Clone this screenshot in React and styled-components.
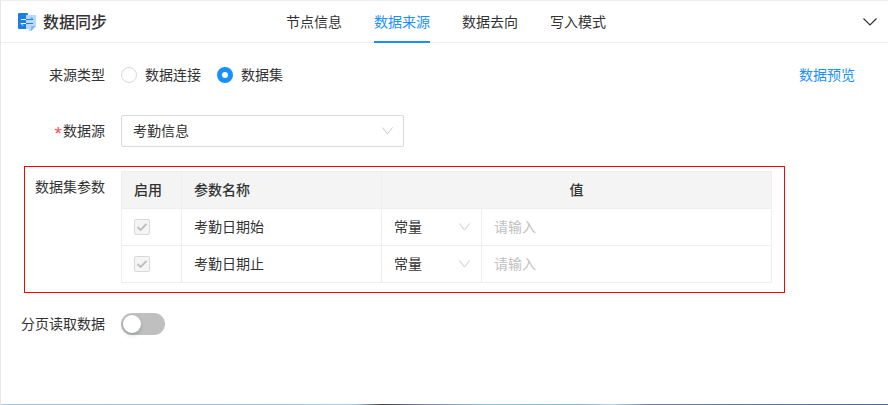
import React from "react";
import styled, { createGlobalStyle } from "styled-components";

const Global = createGlobalStyle`
  html, body { margin: 0; padding: 0; background: #fff; }
  body { font-family: "Noto Sans CJK SC", "Liberation Sans", sans-serif; font-size: 14px; color: #333; }
`;

const Page = styled.div`
  width: 888px; height: 405px; box-sizing: border-box; overflow: hidden;
  border-top: 1px solid #eee; border-left: 1px solid #e8e8e8;
  display: flex; flex-direction: column; position: relative;
`;
const BottomStrip = styled.div`
  position: absolute; left: -1px; right: 0; bottom: 0; height: 1px;
  background: linear-gradient(90deg, #a8c6de 0%, #9cc4dc 25%, #a6cfe0 40%, #3a3f44 43%, #7d86a8 48%, #8fc4d6 55%, #86b5c0 65%, #b4d4e4 69%, #6f7ea0 73%, #4a6a98 100%);
`;
const Header = styled.header`
  height: 42px; flex: none; box-sizing: border-box; border-bottom: 1px solid #eee;
  display: flex; align-items: center; position: relative; padding-left: 17px;
`;
const Brand = styled.div`
  display: flex; align-items: center; gap: 7px;
  font-size: 16px; font-weight: 500; color: #333; line-height: 22px;
`;
const Text = styled.span`
  display: block; line-height: 20px; margin-bottom: 2px; white-space: nowrap;
`;
const Tabs = styled.nav`
  position: absolute; left: 285px; top: 0; height: 42px; display: flex; gap: 32px;
`;
const Tab = styled.div`
  height: 42px; line-height: 40px; box-sizing: border-box; font-size: 14px;
  color: ${p => (p.$active ? "#1890ff" : "#333")};
  border-bottom: 2px solid ${p => (p.$active ? "#1890ff" : "transparent")};
`;
const Collapse = styled.div`
  position: absolute; right: 11px; top: 17px; width: 14px; height: 8px; display: flex;
`;
const Body = styled.main`
  flex: 1; display: flex; flex-direction: column;
`;
const Row = styled.div`
  display: flex; align-items: center; position: relative;
  margin-top: ${p => p.$top}px;
  height: ${p => p.$h}px;
`;
const Label = styled.div`
  width: 104px; flex: none; display: flex; justify-content: flex-end; align-items: center;
  font-size: 14px; color: #333; white-space: nowrap;
`;
const Required = styled.span`
  color: #ff4d4f; font-family: "Liberation Sans", sans-serif; font-size: 19px; line-height: 20px;
  margin-top: 6px; margin-right: 1px;
`;
const Radios = styled.div` margin-left: 16px; display: flex; align-items: center; gap: 16px; `;
const RadioItem = styled.div`
  display: flex; align-items: center; gap: 8px; font-size: 14px; color: #333;
`;
const RadioDot = styled.span`
  width: 16px; height: 16px; box-sizing: border-box; border-radius: 50%; flex: none;
  background: #fff;
  border: ${p => (p.$on ? "5px solid #1890ff" : "1px solid #d9d9d9")};
`;
const Preview = styled.div`
  position: absolute; right: 33px; top: 0; bottom: 0; display: flex; align-items: center;
  color: #1890ff; font-size: 14px;
`;
const SelectBox = styled.div`
  margin-left: 16px; width: 283px; height: 32px; box-sizing: border-box;
  border: 1px solid #d9d9d9; border-radius: 2px;
  display: flex; align-items: center; justify-content: space-between;
  padding: 0 10px 0 11px; color: #333; font-size: 14px;
`;
const ParamBox = styled.section`
  margin-top: 19px; margin-left: 23px; width: 761px; height: 127px; box-sizing: border-box;
  border: 1px solid #f00; display: flex; padding-top: 4px;
`;
const ParamLabel = styled.div`
  width: 80px; flex: none; text-align: right; font-size: 14px; color: #333; line-height: 20px; padding-top: 5px;
`;
const Table = styled.div`
  margin-left: 16px; width: 651px; height: 112px; box-sizing: border-box;
  border: 1px solid #eee; font-size: 14px;
`;
const TableRow = styled.div`
  display: grid; grid-template-columns: 60px 200px 100px 1fr;
  height: ${p => (p.$head ? "36px" : "37px")};
  background: ${p => (p.$head ? "#f4f4f4" : "#fff")};
  font-weight: ${p => (p.$head ? 500 : 400)};
  color: #333;
  border-top: ${p => (p.$head ? "none" : "1px solid #eee")};
  box-sizing: border-box;
`;
const Cell = styled.div`
  display: flex; align-items: center; box-sizing: border-box;
  padding: 0 ${p => (p.$between ? "11px" : "12px")} 0 12px;
  justify-content: ${p => (p.$center ? "center" : p.$between ? "space-between" : "flex-start")};
  border-right: ${p => (p.$last ? "none" : "1px solid #eee")};
  font-size: 14px;
  grid-column: ${p => p.$span || "auto"};
`;
const CheckBox = styled.span`
  width: 16px; height: 16px; box-sizing: border-box; background: #f5f5f5;
  border: 1px solid #d9d9d9; border-radius: 2px; display: flex; align-items: center; justify-content: center;
`;
const Placeholder = styled(Text)` color: #bfbfbf; font-size: 14px; `;
const Switch = styled.div`
  margin-left: 16px; width: 44px; height: 22px; border-radius: 11px; background: #bfbfbf; position: relative;
`;
const Knob = styled.span`
  position: absolute; left: 2px; top: 2px; width: 18px; height: 18px; border-radius: 50%;
  background: #fff; box-shadow: 0 2px 4px rgba(0,35,11,.2);
`;

const Chevron = ({ c = "#c9c9c9", w = 11, h = 8, sw = 1 }) => (
  <svg width={w} height={h} viewBox={`0 0 ${w} ${h}`} fill="none">
    <path d={`M0.5 0.5 L${w / 2} ${h - 1} L${w - 0.5} 0.5`} stroke={c} strokeWidth={sw} />
  </svg>
);

const Logo = () => (
  <svg width="18" height="18" viewBox="0 0 18 18" style={{ display: "block" }}>
    <rect x="0" y="0" width="10" height="16" rx="1" fill="#1a7fe0" />
    <path d="M8 2 H17 Q18 2 18 3 V13 L13 18 H11 V16 H8 Z" fill="#b9d8f6" />
    <path d="M13 18 V13 H18 Z" fill="#7db8f0" />
    <path d="M3 6.5 H8" stroke="#fff" strokeWidth="1" fill="none" />
    <path d="M8 6.5 H15 M13 4.5 L15 6.5" stroke="#1a7fe0" strokeWidth="1" fill="none" />
    <path d="M3 10.5 H8 M3 10.5 L5 12.5" stroke="#fff" strokeWidth="1" fill="none" />
    <path d="M8 10.5 H15" stroke="#1a7fe0" strokeWidth="1" fill="none" />
  </svg>
);

const Check = () => (
  <svg width="12" height="10" viewBox="0 0 12 10" fill="none">
    <path d="M1.5 5 L4.5 8 L10.5 2" stroke="#bdbdbd" strokeWidth="1.8" />
  </svg>
);

const rows = ["考勤日期始", "考勤日期止"];

export default function App() {
  return (
    <Page>
      <Global />
      <Header>
        <Brand><Logo /><Text>数据同步</Text></Brand>
        <Tabs>
          <Tab>节点信息</Tab>
          <Tab $active>数据来源</Tab>
          <Tab>数据去向</Tab>
          <Tab>写入模式</Tab>
        </Tabs>
        <Collapse><Chevron c="#333" w={14} h={8} sw={1.2} /></Collapse>
      </Header>
      <Body>
        <Row $top={16} $h={32}>
          <Label><Text>来源类型</Text></Label>
          <Radios>
            <RadioItem><RadioDot /><Text>数据连接</Text></RadioItem>
            <RadioItem><RadioDot $on /><Text>数据集</Text></RadioItem>
          </Radios>
          <Preview><Text>数据预览</Text></Preview>
        </Row>
        <Row $top={24} $h={32}>
          <Label><Required>*</Required><Text>数据源</Text></Label>
          <SelectBox><Text>考勤信息</Text><Chevron /></SelectBox>
        </Row>
        <ParamBox>
          <ParamLabel>数据集参数</ParamLabel>
          <Table>
            <TableRow $head>
              <Cell><Text>启用</Text></Cell>
              <Cell><Text>参数名称</Text></Cell>
              <Cell $last $center $span="3 / 5"><Text>值</Text></Cell>
            </TableRow>
            {rows.map(r => (
              <TableRow key={r}>
                <Cell><CheckBox><Check /></CheckBox></Cell>
                <Cell><Text>{r}</Text></Cell>
                <Cell $between><Text>常量</Text><Chevron /></Cell>
                <Cell $last><Placeholder>请输入</Placeholder></Cell>
              </TableRow>
            ))}
          </Table>
        </ParamBox>
        <Row $top={20} $h={22}>
          <Label><Text>分页读取数据</Text></Label>
          <Switch><Knob /></Switch>
        </Row>
      </Body>
      <BottomStrip />
    </Page>
  );
}
